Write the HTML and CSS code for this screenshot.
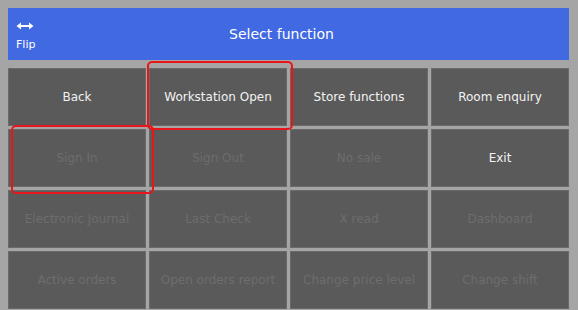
FILE: index.html
```html
<!DOCTYPE html>
<html lang="en">
<head>
  <meta charset="UTF-8" />
  <title>Select function</title>
  <link rel="stylesheet" href="styles.css">
</head>
<body>
  <div class="header">
    <div class="flip">
      <svg width="18" height="8" viewBox="0 0 18 8">
        <path d="M4 4 H14" stroke="#fff" stroke-width="2"/>
        <path d="M0.5 4 L5 0.5 L5 7.5 Z M17.5 4 L13 0.5 L13 7.5 Z" fill="#fff"/>
      </svg>
      <span>Flip</span>
    </div>
    <div class="title">Select function</div>
  </div>

  <div class="grid">
    <button class="fn">Back</button>
    <button class="fn">Workstation Open</button>
    <button class="fn">Store functions</button>
    <button class="fn">Room enquiry</button>

    <button class="fn off">Sign In</button>
    <button class="fn off">Sign Out</button>
    <button class="fn off">No sale</button>
    <button class="fn">Exit</button>

    <button class="fn off">Electronic Journal</button>
    <button class="fn off">Last Check</button>
    <button class="fn off">X read</button>
    <button class="fn off">Dashboard</button>

    <button class="fn off">Active orders</button>
    <button class="fn off">Open orders report</button>
    <button class="fn off">Change price level</button>
    <button class="fn off">Change shift</button>
  </div>

  <!-- highlight marks -->
  <div class="mark mark-ws"></div>
  <div class="mark mark-sign"></div>
</body>
</html>
```

FILE: styles.css
```css
body {
  margin: 0;
  padding: 8px 9px 0 8px;
  background: #a5a5a5;
  font-family: "DejaVu Sans", Verdana, sans-serif;
  position: relative;
  height: 310px;
  box-sizing: border-box;
  overflow: hidden;
}

.header {
  height: 52px;
  background: #4169e1;
  color: #fff;
  display: flex;
  align-items: center;
  position: relative;
}

.flip {
  width: 60px;
  padding-left: 8px;
  display: flex;
  flex-direction: column;
  align-items: flex-start;
  gap: 8px;
  font-size: 11px;
  margin-top: 4px;
}

.flip svg {
  margin-left: 0;
}

.title {
  flex: 1;
  text-align: center;
  font-size: 14px;
  margin-right: 82px;
  margin-top: -1px;
}

.grid {
  margin-top: 8px;
  display: grid;
  grid-template-columns: repeat(4, 138px);
  grid-template-rows: repeat(4, 58px);
  gap: 3px;
}

.fn {
  background: #5a5a5a;
  border: 1px solid #6a6a6a;
  color: #f2f2f2;
  font-family: inherit;
  font-size: 12px;
  padding: 0;
  margin: 0;
}

.fn.off {
  color: #6d6d6d;
}

.mark {
  position: absolute;
  border: 2px solid #e8161b;
  border-radius: 5px;
}

.mark-ws {
  left: 147px;
  top: 61px;
  width: 142px;
  height: 65px;
}

.mark-sign {
  left: 11px;
  top: 125px;
  width: 139px;
  height: 65px;
}
```
